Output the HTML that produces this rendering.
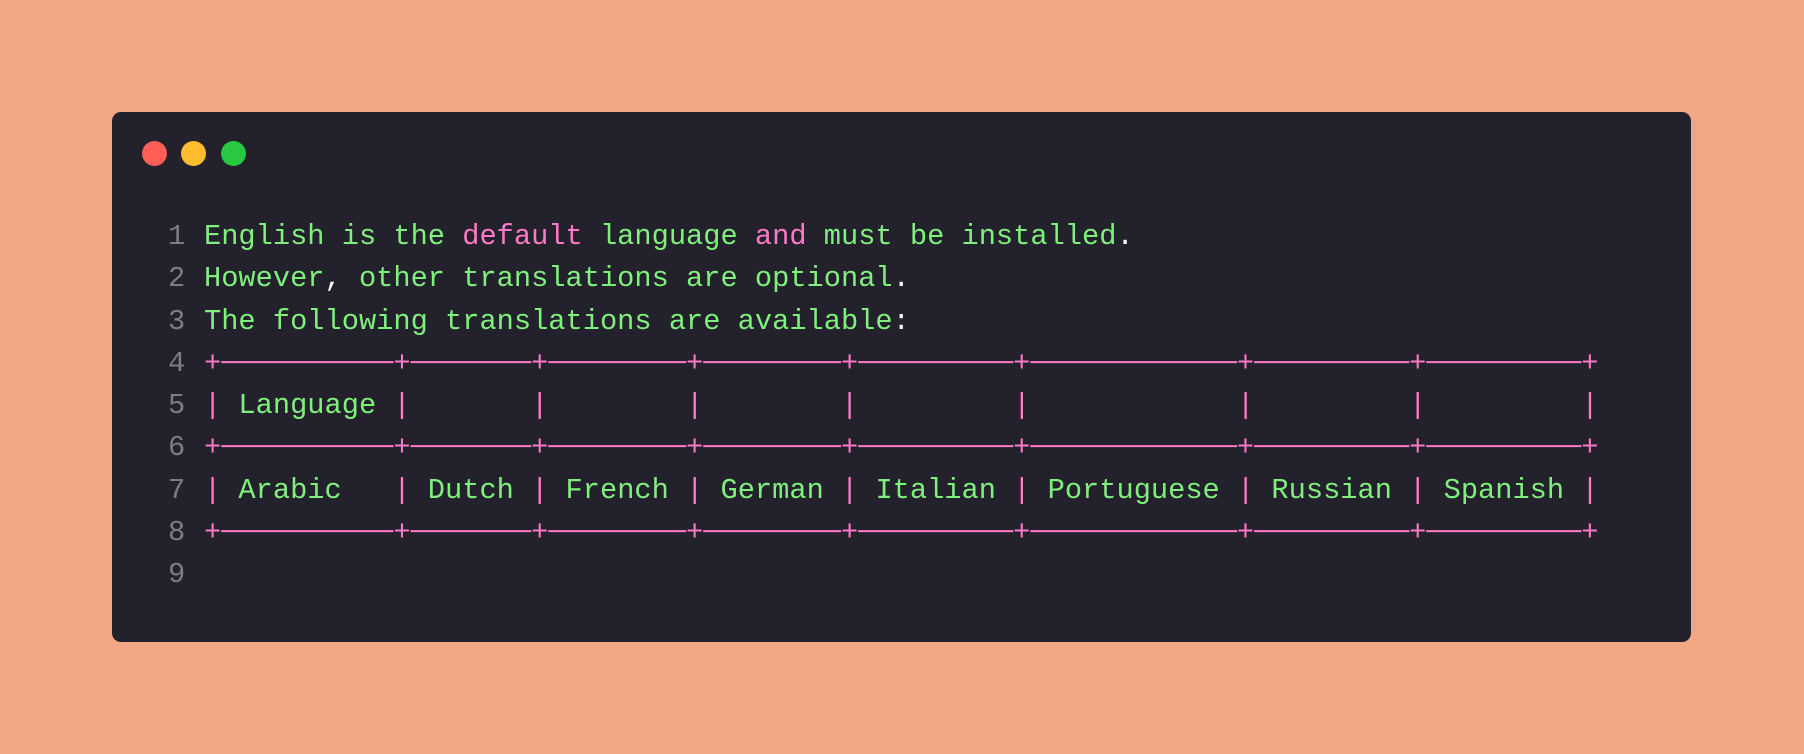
<!DOCTYPE html>
<html><head><meta charset="utf-8"><style>
html,body{margin:0;padding:0}
body{width:1804px;height:754px;background:#f3a683;position:relative;overflow:hidden}
.win{position:absolute;left:112px;top:112px;width:1579px;height:530px;background:#22212c;border-radius:9px}
.dot{position:absolute;top:141px;width:25px;height:25px;border-radius:50%}
pre{position:absolute;margin:0;top:216px;font-family:"Liberation Mono",monospace;font-size:28.7px;line-height:42.3px;color:#80f07c}
.ln{left:168px;color:#7d7c85;text-align:right}
.code{left:204px}
.p{color:#ff79c6}.w{color:#f8f8f2}
</style></head><body>
<div class="win"></div>
<div class="dot" style="left:142px;background:#ff5f57"></div>
<div class="dot" style="left:181px;background:#febc2e"></div>
<div class="dot" style="left:221px;background:#28c840"></div>
<pre class="ln">1
2
3
4
5
6
7
8
9</pre>
<pre class="code">English is the <span class="p">default</span> language <span class="p">and</span> must be installed<span class="w">.</span>
However<span class="w">,</span> other translations are optional<span class="w">.</span>
The following translations are available<span class="w">:</span>
<span class="p">+──────────+───────+────────+────────+─────────+────────────+─────────+─────────+</span>
<span class="p">|</span> Language <span class="p">|</span>       <span class="p">|</span>        <span class="p">|</span>        <span class="p">|</span>         <span class="p">|</span>            <span class="p">|</span>         <span class="p">|</span>         <span class="p">|</span>
<span class="p">+──────────+───────+────────+────────+─────────+────────────+─────────+─────────+</span>
<span class="p">|</span> Arabic   <span class="p">|</span> Dutch <span class="p">|</span> French <span class="p">|</span> German <span class="p">|</span> Italian <span class="p">|</span> Portuguese <span class="p">|</span> Russian <span class="p">|</span> Spanish <span class="p">|</span>
<span class="p">+──────────+───────+────────+────────+─────────+────────────+─────────+─────────+</span>
</pre>
</body></html>
